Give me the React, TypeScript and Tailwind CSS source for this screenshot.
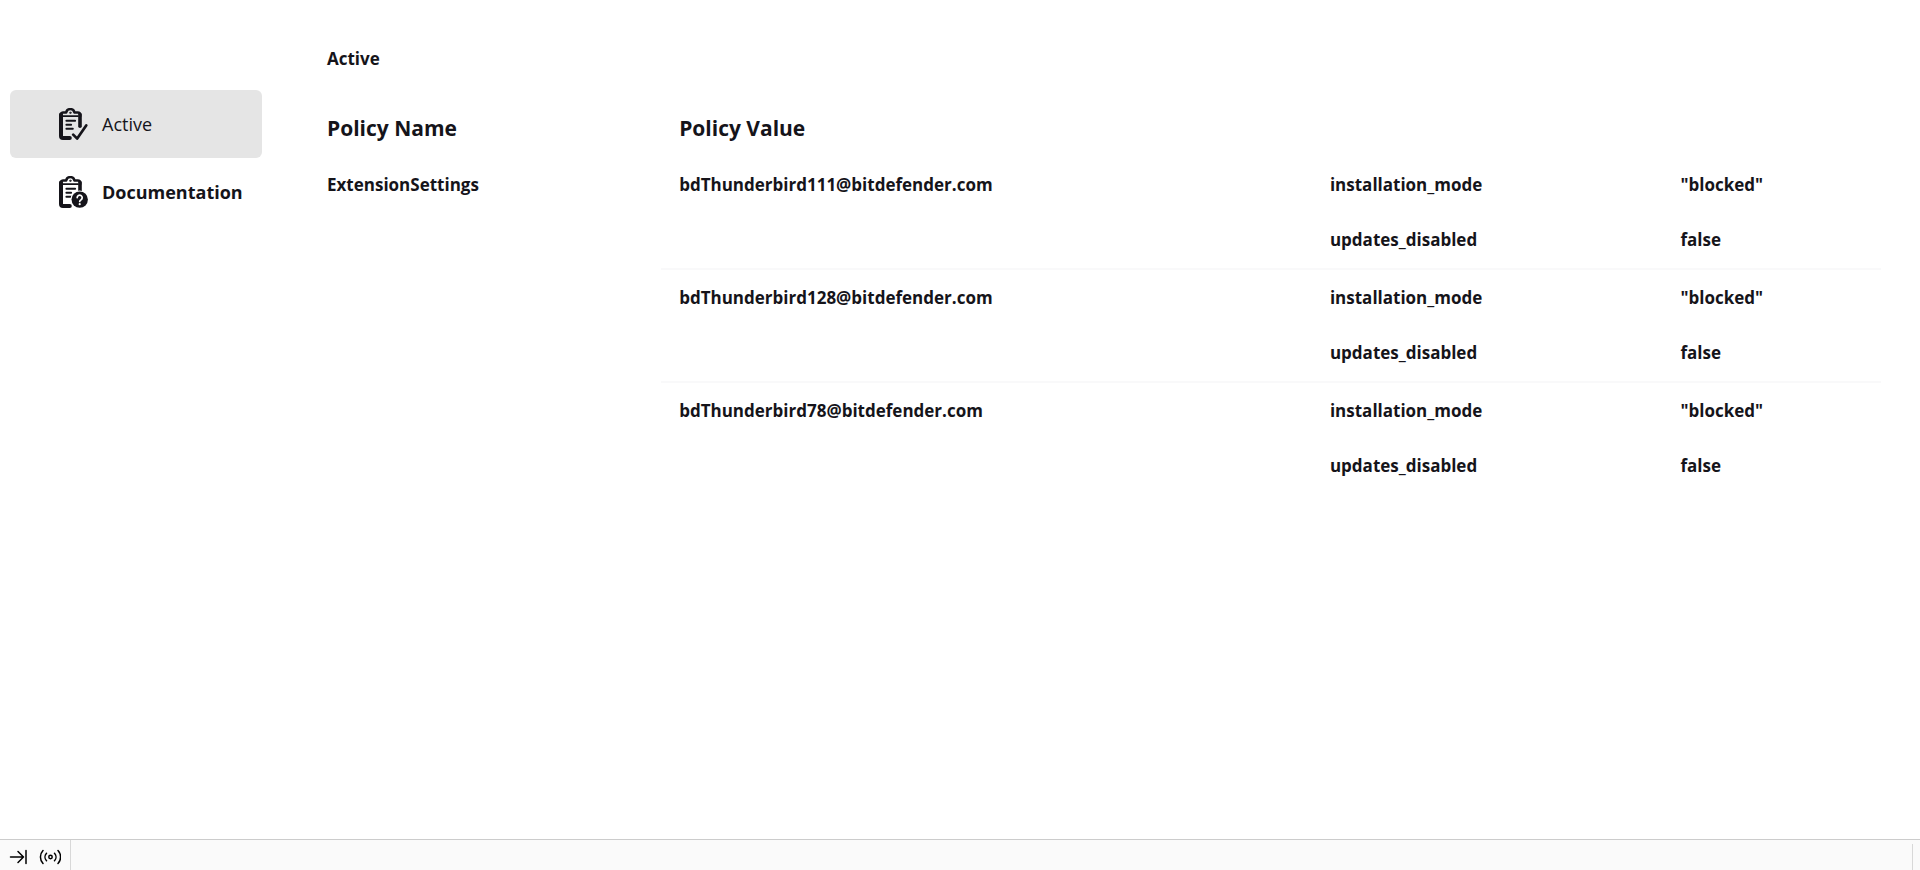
import { useState } from 'react';

type Setting = { key: string; value: string };
type Extension = { id: string; settings: Setting[] };

const blocked: Setting[] = [
    { key: 'installation_mode', value: '"blocked"' },
    { key: 'updates_disabled', value: 'false' },
];

const extensions: Extension[] = [
    { id: 'bdThunderbird111@bitdefender.com', settings: blocked },
    { id: 'bdThunderbird128@bitdefender.com', settings: blocked },
    { id: 'bdThunderbird78@bitdefender.com', settings: blocked },
];

const rowCount = extensions.reduce((n, ext) => n + ext.settings.length, 0);

function Clipboard() {
    return (
        <g fill="none" stroke="currentColor" strokeLinecap="round" strokeLinejoin="round">
            <path d="M11.8 30H5a2 2 0 0 1-2-2V6.5" strokeWidth="4" />
            <path d="M22 6.5v11.7" strokeWidth="3.6" />
            <path d="M2.8 8V6.8A2.4 2.4 0 0 1 5.2 4.4h3a4.2 4.2 0 0 1 8.2 0h3.4a2.4 2.4 0 0 1 2.4 2.4V8" strokeWidth="2.5" />
            <path d="M5 8.2h15" strokeWidth="1.8" />
            <circle cx="12.3" cy="4.8" r=".7" strokeWidth="1" />
            <path d="M8.4 12.8h8.7M8.4 16.8h4.7M8.4 20.8h6.4" strokeWidth="2" />
        </g>
    );
}

function ActiveIcon() {
    return (
        <svg viewBox="0 0 32 32" className="size-8 shrink-0" aria-hidden="true">
            <Clipboard />
            <path d="m15.2 26.6 4 4L28.2 17.4" fill="none" stroke="currentColor" strokeWidth="2.7" strokeLinecap="round" strokeLinejoin="round" />
        </svg>
    );
}

function DocumentationIcon() {
    return (
        <svg viewBox="0 0 32 32" className="size-8 shrink-0" aria-hidden="true">
            <Clipboard />
            <circle cx="21.7" cy="23.6" r="9.2" className="fill-white" />
            <circle cx="21.7" cy="23.6" r="8.2" fill="currentColor" />
            <path d="M19.2 21.6a2.5 2.5 0 1 1 3.9 2.1c-.9.5-1.4.9-1.4 1.8" fill="none" stroke="#fff" strokeWidth="1.7" strokeLinecap="round" />
            <circle cx="21.7" cy="28.2" r="1.1" fill="#fff" />
        </svg>
    );
}

export default function App() {
    const [tab, setTab] = useState('active');

    const item = 'flex h-[68px] w-full items-center gap-3 rounded-md pl-12 text-left text-lg';

    return (
        <div className="flex min-h-screen flex-col bg-white font-['Open_Sans',sans-serif] text-[#15141a]">
            <div className="flex flex-1">
                <nav className="w-[272px] shrink-0 px-[10px] pt-[90px]">
                    <button
                        onClick={() => setTab('active')}
                        className={`${item} ${tab === 'active' ? 'bg-[#e5e5e5] font-normal' : 'font-bold'}`}
                    >
                        <ActiveIcon />
                        Active
                    </button>
                    <button
                        onClick={() => setTab('documentation')}
                        className={`${item} ${tab === 'documentation' ? 'bg-[#e5e5e5] font-normal' : 'font-bold'}`}
                    >
                        <DocumentationIcon />
                        Documentation
                    </button>
                </nav>

                <main className="flex-1 pt-[47px] pr-[39px] pl-[37px]">
                    <h1 className="px-[18px] text-[17px] leading-6 font-bold">Active</h1>
                    <table className="mt-7 w-full table-fixed border-separate border-spacing-0 text-left text-[17px] leading-6 font-bold">
                        <colgroup>
                            <col className="w-[22.4%]" />
                            <col className="w-[41.4%]" />
                            <col className="w-[22.3%]" />
                            <col />
                        </colgroup>
                        <thead>
                            <tr className="h-[58px] text-[21px]">
                                <th className="px-[18px]">Policy Name</th>
                                <th colSpan={3} className="px-[18px]">Policy Value</th>
                            </tr>
                        </thead>
                        <tbody>
                            {extensions.map((ext, i) =>
                                ext.settings.map((setting, j) => {
                                    const isLast = j === ext.settings.length - 1;
                                    const line = i < extensions.length - 1 ? 'border-b-2 border-[#f9f9fa]' : '';
                                    return (
                                        <tr key={ext.id + setting.key} className={isLast ? 'h-[58px]' : 'h-[55px]'}>
                                            {i === 0 && j === 0 && (
                                                <td rowSpan={rowCount} className="px-[18px] pt-4 align-top">ExtensionSettings</td>
                                            )}
                                            {j === 0 && (
                                                <td rowSpan={ext.settings.length} className={`px-[18px] pt-4 align-top ${line}`}>{ext.id}</td>
                                            )}
                                            <td className={`px-[18px] pt-4 align-top ${isLast ? line : ''}`}>{setting.key}</td>
                                            <td className={`px-[18px] pt-4 align-top ${isLast ? line : ''}`}>{setting.value}</td>
                                        </tr>
                                    );
                                })
                            )}
                        </tbody>
                    </table>
                </main>
            </div>

            {/* Status bar */}
            <footer className="flex h-[31px] border-t border-[#cccccc] bg-[#fafafa] text-black">
                <div className="flex w-[71px] items-center gap-3 border-r border-[#d8d8d8] pt-1 pl-[9px]">
                    <button aria-label="Toggle spaces toolbar">
                        <svg viewBox="0 0 18 18" className="size-[18px]" fill="none" stroke="currentColor" strokeWidth="1.5" strokeLinecap="round" strokeLinejoin="round">
                            <path d="M1.5 9h13M9 3.5 14.5 9 9 14.5M17 2.5v13" />
                        </svg>
                    </button>
                    <button aria-label="Connection status">
                        <svg viewBox="0 0 22 18" className="h-[18px] w-[22px]" fill="none" stroke="currentColor" strokeWidth="1.5" strokeLinecap="round">
                            <circle cx="11.5" cy="9" r="1.7" />
                            <path d="M7.5 5.2a5.6 5.6 0 0 0 0 7.6M15.5 5.2a5.6 5.6 0 0 1 0 7.6M4 2.5a9.5 9.5 0 0 0 0 13M19 2.5a9.5 9.5 0 0 1 0 13" />
                        </svg>
                    </button>
                </div>
                <div className="mt-1 mr-[7px] flex-1 border-r border-[#d8d8d8]" />
            </footer>
        </div>
    );
}
